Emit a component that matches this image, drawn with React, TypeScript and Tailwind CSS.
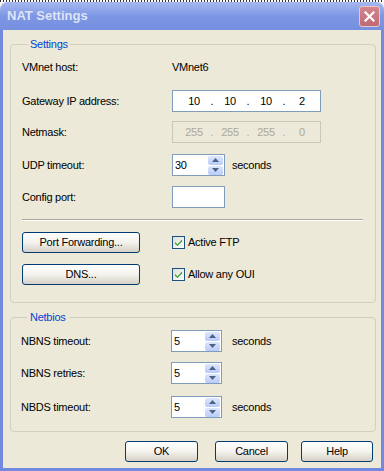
import React from 'react'

const XpButton = ({ label, className = '' }: { label: string; className?: string }) => (
  <button
    type="button"
    className={`h-[21px] rounded-[3px] border border-[#003c74] bg-gradient-to-b from-[#ffffff] via-[#f4f3ee] to-[#d6d0c5] text-[11px] text-black ${className}`}
  >
    {label}
  </button>
)

const Checkbox = ({ label }: { label: string }) => (
  <label className="flex items-center gap-[3px]">
    <span className="flex h-[13px] w-[13px] items-center justify-center border border-[#1c5180] bg-gradient-to-br from-[#dcdcd7] to-[#ffffff]">
      <svg width="9" height="9" viewBox="0 0 9 9">
        <path d="M1 4 L3.5 6.5 L8 1.5 L8 3.5 L3.5 8 L1 5.8 Z" fill="#21a121" />
      </svg>
    </span>
    <span>{label}</span>
  </label>
)

const SpinBtn = ({ up }: { up?: boolean }) => (
  <span className="flex h-[9px] w-[15px] items-center justify-center rounded-[2px] bg-gradient-to-b from-[#dde7fe] to-[#b8cbf8]">
    <svg width="7" height="4" viewBox="0 0 7 4">
      <path d={up ? 'M0 4 L3.5 0 L7 4 Z' : 'M0 0 L3.5 4 L7 0 Z'} fill="#4d6185" />
    </svg>
  </span>
)

const SpinBox = ({ value, className }: { value: string; className: string }) => (
  <div className={`flex h-[22px] items-center border border-[#7f9db9] bg-white pl-[2px] pr-[1px] ${className}`}>
    <span className="flex-1">{value}</span>
    <div className="flex flex-col gap-px">
      <SpinBtn up />
      <SpinBtn />
    </div>
  </div>
)

const IpBox = ({ parts, disabled }: { parts: string[]; disabled?: boolean }) => (
  <div
    className={[
      'flex h-[22px] w-[149px] items-center border pl-[5px]',
      disabled ? 'border-[#c9c7ba] bg-[#ece9d8] text-[#aca899]' : 'border-[#7f9db9] bg-white text-black',
    ].join(' ')}
  >
    {parts.map((p, i) => (
      <React.Fragment key={i}>
        {i > 0 && <span className="w-[4px] text-center">.</span>}
        <span className="w-[32px] text-center">{p}</span>
      </React.Fragment>
    ))}
  </div>
)

const Row = ({ label, children, className = '' }: { label: string; children?: React.ReactNode; className?: string }) => (
  <div className={`flex h-[22px] items-center ${className}`}>
    <span className="w-[150px]">{label}</span>
    {children}
  </div>
)

export default function App() {
  return (
    <div className="h-[471px] w-[384px] overflow-hidden bg-[#f4f4f4] font-['Liberation_Sans',Arial,sans-serif] text-[11px] tracking-[-0.25px] text-black">
      {/* desktop strip behind the window */}
      <div className="h-[2px] bg-[repeating-linear-gradient(90deg,#333_0_1px,#fff_1px_3px)]" />

      <div className="flex h-[469px] flex-col">
        {/* Title bar */}
        <div className="flex h-[28px] items-center justify-between rounded-t-[8px] bg-gradient-to-b from-[#a7b8f0] via-[#7d97e4] to-[#7690e0] pl-[7px] pr-[4px]">
          <span className="text-[13px] font-bold tracking-normal text-[#dde4f7]">NAT Settings</span>
          <span className="flex h-[21px] w-[21px] items-center justify-center rounded-[3px] border border-[#e6c6cb] bg-gradient-to-b from-[#d4858e] to-[#bf6a75]">
            <svg width="11" height="11" viewBox="0 0 11 11">
              <path d="M1.5 1.5 L9.5 9.5 M9.5 1.5 L1.5 9.5" stroke="#fff" strokeWidth="2.2" strokeLinecap="square" />
            </svg>
          </span>
        </div>

        {/* Client area */}
        <div className="flex flex-1 flex-col border-x-[3px] border-b-[3px] border-[#7389e0] bg-[#ece9d8] pl-[7px] pr-[5px]">
          <fieldset className="mt-[7px] rounded-[4px] border border-[#d0d0bf] pb-[17px] pl-[11px] pr-[12px]">
            <legend className="ml-[6px] px-[2px] leading-[14px] text-[#0046d5]">Settings</legend>
            <Row label="VMnet host:" className="mt-[5px]">
              <span>VMnet6</span>
            </Row>
            <Row label="Gateway IP address:" className="mt-[12px]">
              <IpBox parts={['10', '10', '10', '2']} />
            </Row>
            <Row label="Netmask:" className="mt-[9px]">
              <IpBox parts={['255', '255', '255', '0']} disabled />
            </Row>
            <Row label="UDP timeout:" className="mt-[11px]">
              <SpinBox value="30" className="w-[53px]" />
              <span className="ml-[7px]">seconds</span>
            </Row>
            <Row label="Config port:" className="mt-[10px]">
              <div className="h-[22px] w-[53px] border border-[#7f9db9] bg-white" />
            </Row>
            <div className="mt-[11px] border-t border-b border-t-[#aca899] border-b-white" />
            <div className="mt-[11px] flex items-center">
              <XpButton label="Port Forwarding..." className="w-[118px]" />
              <div className="ml-[32px]">
                <Checkbox label="Active FTP" />
              </div>
            </div>
            <div className="mt-[11px] flex items-center">
              <XpButton label="DNS..." className="w-[118px]" />
              <div className="ml-[32px]">
                <Checkbox label="Allow any OUI" />
              </div>
            </div>
          </fieldset>

          <fieldset className="mt-[7px] rounded-[4px] border border-[#d0d0bf] pb-[13px] pl-[10px] pr-[12px]">
            <legend className="ml-[6px] px-[3px] leading-[14px] text-[#0046d5]">Netbios</legend>
            <Row label="NBNS timeout:" className="mt-[6px]">
              <SpinBox value="5" className="w-[51px]" />
              <span className="ml-[10px]">seconds</span>
            </Row>
            <Row label="NBNS retries:" className="mt-[10px]">
              <SpinBox value="5" className="w-[51px]" />
            </Row>
            <Row label="NBDS timeout:" className="mt-[12px]">
              <SpinBox value="5" className="w-[51px]" />
              <span className="ml-[10px]">seconds</span>
            </Row>
          </fieldset>

          <div className="mt-[9px] flex pl-[115px]">
            <XpButton label="OK" className="w-[73px]" />
            <XpButton label="Cancel" className="ml-[17px] w-[73px]" />
            <XpButton label="Help" className="ml-[13px] w-[72px]" />
          </div>
        </div>
      </div>
    </div>
  )
}
